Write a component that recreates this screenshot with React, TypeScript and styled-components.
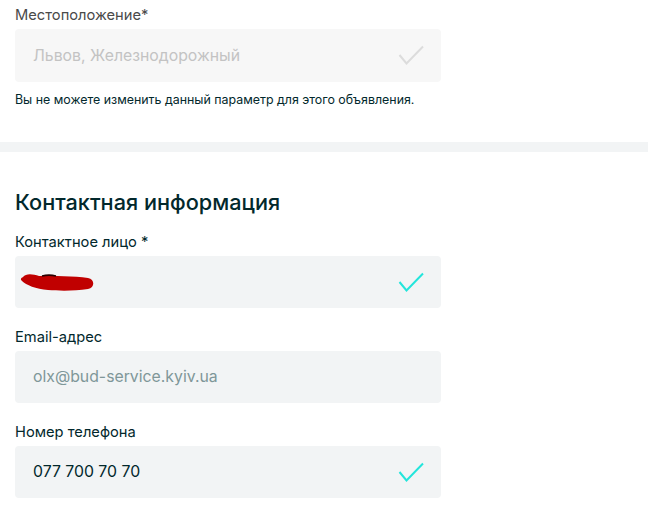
import React from "react";
import styled, { createGlobalStyle } from "styled-components";

const Global = createGlobalStyle`
  html, body { margin: 0; padding: 0; background: #fff; }
  body { font-family: Inter, "Open Sans", sans-serif; color: #002f34; }
`;

const Page = styled.div`
  width: 648px;
  display: flex;
  flex-direction: column;
`;

const Section = styled.section<{ $pt: number; $pb: number }>`
  padding: ${(p) => p.$pt}px 207px ${(p) => p.$pb}px 15px;
  display: flex;
  flex-direction: column;
`;

const Band = styled.div`
  height: 10px;
  background: #f2f4f5;
`;

const Heading = styled.h2`
  margin: 0 0 20px 0;
  font-size: 21.7px;
  font-weight: 500;
  line-height: 24px;
  color: #02282c;
`;

const Field = styled.div<{ $mb: number }>`
  display: flex;
  flex-direction: column;
  margin-bottom: ${(p) => p.$mb}px;
`;

const Label = styled.label<{ $muted?: boolean }>`
  font-size: 14.7px;
  line-height: 17px;
  margin-bottom: 5px;
  color: ${(p) => (p.$muted ? "#4a4a4a" : "#02282c")};
`;

const Box = styled.div<{ $disabled?: boolean }>`
  height: 52.5px;
  border-radius: 4px;
  background: ${(p) => (p.$disabled ? "#f7f7f7" : "#f2f4f5")};
  display: flex;
  align-items: center;
  justify-content: space-between;
  padding: 0 17px 0 18px;
  box-sizing: border-box;
`;

const Value = styled.span<{ $tone: "disabled" | "muted" | "normal" }>`
  font-size: 15.8px;
  color: ${(p) =>
    p.$tone === "disabled" ? "#c3c3c3" : p.$tone === "muted" ? "#7f9799" : "#02282c"};
`;

const Hint = styled.p`
  margin: 11px 0 0;
  font-size: 12.4px;
  line-height: 14px;
  color: #02282c;
`;

const Redacted = styled.svg`
  margin-left: -13px;
  margin-top: 1px;
`;

const Check = ({ color }: { color: string }) => (
  <svg width="26" height="20" viewBox="0 0 26 20">
    <path d="M1.5 10 L8.5 18.5 L25 1.5" fill="none" stroke={color} strokeWidth="2" />
  </svg>
);

const Scribble = () => (
  <Redacted width="76" height="18" viewBox="0 0 76 18">
    <path
      d="M3 4 C6 0 13 1 19 3 C34 3 54 3 68 5 C75 6 75 15 68 16 C55 18 40 18 28 17 C16 16 6 12 2 8 C0 6 1 5 3 4 Z"
      fill="#c00000"
    />
    <path d="M22 3 C26 2 32 2 36 3" stroke="#2a0000" strokeWidth="1.5" fill="none" />
  </Redacted>
);

export default function App() {
  return (
    <Page>
      <Global />
      <Section $pt={7} $pb={35}>
        <Field $mb={0}>
          <Label $muted>Местоположение*</Label>
          <Box $disabled>
            <Value $tone="disabled">Львов, Железнодорожный</Value>
            <Check color="#dcdcdc" />
          </Box>
          <Hint>Вы не можете изменить данный параметр для этого объявления.</Hint>
        </Field>
      </Section>
      <Band />
      <Section $pt={38} $pb={20}>
        <Heading>Контактная информация</Heading>
        <Field $mb={20.5}>
          <Label>Контактное лицо *</Label>
          <Box>
            <Scribble />
            <Check color="#23e5db" />
          </Box>
        </Field>
        <Field $mb={20.5}>
          <Label>Email-адрес</Label>
          <Box>
            <Value $tone="muted">olx@bud-service.kyiv.ua</Value>
          </Box>
        </Field>
        <Field $mb={0}>
          <Label>Номер телефона</Label>
          <Box>
            <Value $tone="normal">077 700 70 70</Value>
            <Check color="#23e5db" />
          </Box>
        </Field>
      </Section>
    </Page>
  );
}
